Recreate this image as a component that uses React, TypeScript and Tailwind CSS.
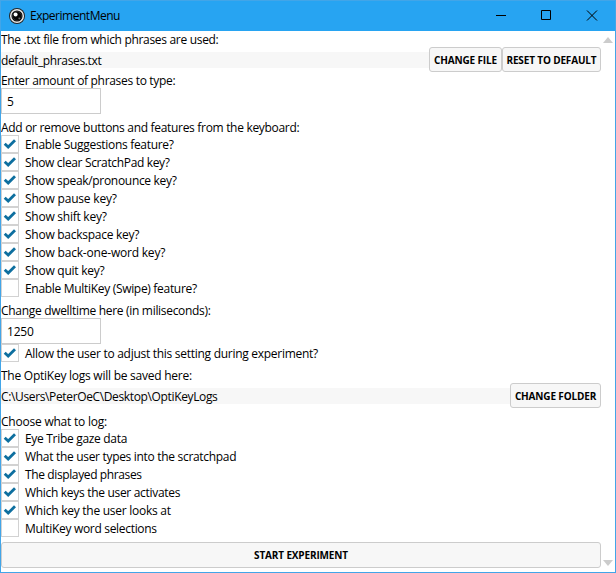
import React from 'react';

const keyboardOptions = [
  { label: 'Enable Suggestions feature?', on: true },
  { label: 'Show clear ScratchPad key?', on: true, tracking: 'tracking-[-0.35px]' },
  { label: 'Show speak/pronounce key?', on: true },
  { label: 'Show pause key?', on: true, tracking: 'tracking-[-0.2px]' },
  { label: 'Show shift key?', on: true, tracking: 'tracking-[-0.25px]' },
  { label: 'Show backspace key?', on: true, tracking: 'tracking-[-0.26px]' },
  { label: 'Show back-one-word key?', on: true, tracking: 'tracking-[-0.2px]' },
  { label: 'Show quit key?', on: true, tracking: 'tracking-[-0.25px]' },
  { label: 'Enable MultiKey (Swipe) feature?', on: false },
];

const logOptions = [
  { label: 'Eye Tribe gaze data', on: true },
  { label: 'What the user types into the scratchpad', on: true },
  { label: 'The displayed phrases', on: true, tracking: 'tracking-[-0.38px]' },
  { label: 'Which keys the user activates', on: true },
  { label: 'Which key the user looks at', on: true, tracking: 'tracking-[-0.26px]' },
  { label: 'MultiKey word selections', on: false },
];

function Label({ children }: { children: React.ReactNode }) {
  return <div className="h-4 leading-[17px]">{children}</div>;
}

function Check({ label, on, tracking = '' }: { label: string; on: boolean; tracking?: string }) {
  return (
    <div className="flex h-[18px] items-start">
      <span className="flex size-[18px] shrink-0 border border-[#d2d2d2] bg-white">
        {on && (
          <svg className="size-4" viewBox="0 0 16 16" fill="none">
            <path d="M2.7 7.7 6.2 11.1 13 4.3" stroke="#0e6f9f" strokeWidth="2.8" />
          </svg>
        )}
      </span>
      <span className={`ml-1.5 leading-[20px] ${tracking}`}>{label}</span>
    </div>
  );
}

function Button({ className, children }: { className: string; children: React.ReactNode }) {
  return (
    <button
      className={`flex shrink-0 items-center justify-center rounded-[3px] border border-[#cccccc] bg-[#f7f7f7] text-[10px] font-bold leading-none tracking-[-0.15px] ${className}`}
    >
      {children}
    </button>
  );
}

function PathRow({ path, children }: { path: string; children: React.ReactNode }) {
  return (
    <div className="flex h-[25px] items-start">
      <div className="mt-[5px] h-4 flex-1 bg-[#f7f7f7] leading-[17px] tracking-[-0.36px]">{path}</div>
      {children}
    </div>
  );
}

function Field({ value }: { value: string }) {
  return (
    <input
      className="block h-[26px] w-[100px] border border-[#cccccc] bg-white px-[5px] text-[12px] tracking-[-0.2px] outline-none"
      defaultValue={value}
    />
  );
}

export default function App() {
  return (
    <div className="flex h-[573px] w-[616px] flex-col overflow-hidden border border-t-0 border-[#42a5e8] bg-white font-['Open_Sans','Noto_Sans',sans-serif] text-[12px] tracking-[-0.31px] whitespace-nowrap text-black">
      <header className="-mx-px flex h-[31px] shrink-0 items-center border-t border-[#42a5e8] bg-[#27a4f2] pl-[9px]">
        <svg className="size-4" viewBox="0 0 16 16">
          <circle cx="8" cy="8" r="8" fill="#252525" />
          <circle cx="8" cy="8" r="6.3" fill="#050505" stroke="#e8e8e8" strokeWidth="1.5" />
          <circle cx="8" cy="8" r="4.5" fill="none" stroke="#444" strokeWidth=".6" />
          <circle cx="6.6" cy="6.4" r="2" fill="#fff" />
          <circle cx="10.2" cy="10.3" r=".8" fill="#888" />
        </svg>
        <span className="ml-[5px] tracking-[-0.48px]">ExperimentMenu</span>
        <svg className="ml-auto h-[30px] w-[120px]" viewBox="0 0 120 30" fill="none" stroke="#000">
          <path d="M0 14.5h10M45.5 9.5h9v9h-9zM91 9.5l10 10M101 9.5l-10 10" />
        </svg>
      </header>

      <main className="flex min-h-0 flex-1">
        <div className="w-[600px] shrink-0">
          <Label>The .txt file from which phrases are used:</Label>
          <PathRow path="default_phrases.txt">
            <Button className="h-[25px] w-[73px]">CHANGE FILE</Button>
            <Button className="h-[25px] w-[99px]">RESET TO DEFAULT</Button>
          </PathRow>
          <Label>Enter amount of phrases to type:</Label>
          <Field value="5" />

          <div className="mt-[5px]">
            <Label>Add or remove buttons and features from the keyboard:</Label>
            {keyboardOptions.map((o) => (
              <Check key={o.label} {...o} />
            ))}
          </div>

          <div className="mt-[5px]">
            <Label>Change dwelltime here (in miliseconds):</Label>
            <Field value="1250" />
            <Check
              label="Allow the user to adjust this setting during experiment?"
              tracking="tracking-[-0.28px]"
              on
            />
          </div>

          <div className="mt-[5px]">
            <Label>
              <span className="tracking-[-0.25px]">The OptiKey logs will be saved here:</span>
            </Label>
            <PathRow path="C:\Users\PeterOeC\Desktop\OptiKeyLogs">
              <Button className="h-[25px] w-[91px]">CHANGE FOLDER</Button>
            </PathRow>
          </div>

          <div className="mt-[5px]">
            <Label>
              <span className="tracking-[-0.22px]">Choose what to log:</span>
            </Label>
            {logOptions.map((o) => (
              <Check key={o.label} {...o} />
            ))}
          </div>
          <Button className="mt-[5px] h-[26px] w-full">START EXPERIMENT</Button>
        </div>

        <div className="flex w-3.5 flex-col items-center justify-between pt-1.5 pb-1.5">
          <svg className="h-1.5 w-2.5" viewBox="0 0 10 6">
            <path d="M0 6 5 0l5 6z" fill="#cccccc" />
          </svg>
          <svg className="h-1.5 w-2.5" viewBox="0 0 10 6">
            <path d="M0 0 5 6l5-6z" fill="#cccccc" />
          </svg>
        </div>
      </main>
    </div>
  );
}
